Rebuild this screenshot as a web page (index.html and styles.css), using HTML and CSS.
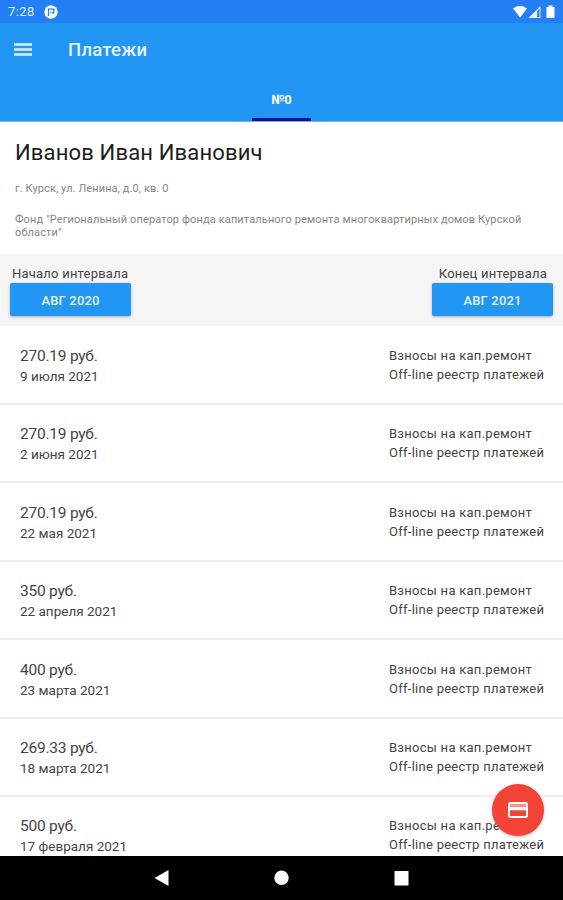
FILE: index.html
```
<!DOCTYPE html>
<html lang="ru">
<head>
  <meta charset="UTF-8">
  <meta name="viewport" content="width=device-width, initial-scale=1.0">
  <title>Платежи</title>
  <link rel="stylesheet" href="styles.css">
</head>
<body>
  <div class="screen">
    <div class="status-bar">
      <span class="clock">7:28</span>
      <svg class="app-icon" width="14" height="14" viewBox="0 0 14 14">
        <circle cx="7" cy="7" r="6.7" fill="#fff"/>
        <path d="M4.500 11V4.200h5.300v3.600H8" fill="none" stroke="#237ff3" stroke-width="1.300"/>
        <path d="M7 6.500v2" stroke="#237ff3" stroke-width="1"/>
      </svg>
      <svg class="signals" width="43" height="14" viewBox="0 0 43 14">
        <path d="M0 3.500Q7-2 14 3.500L7.100 12.500z" fill="#fff"/>
        <path d="M15.500 13L27.500 1v12z" fill="#e4f0ff"/>
        <path d="M24.200 6l2.300-2.300V12h-2.300z" fill="#237ff3"/>
        <path d="M33.500 2h2V.5h4V2h2v11h-8z" fill="#fff"/>
      </svg>
    </div>

    <header class="app-header">
      <div class="toolbar">
        <svg class="menu-icon" width="18" height="13" viewBox="0 0 18 13">
          <path d="M0 1.500h18M0 6.500h18M0 11.500h18" stroke="#dcefff" stroke-width="2.500"/>
        </svg>
        <h1>Платежи</h1>
      </div>
      <div class="tabs"><span class="tab">№0</span></div>
    </header>

    <section class="owner">
      <h2>Иванов Иван Иванович</h2>
      <p class="address">г. Курск, ул. Ленина, д.0, кв. 0</p>
      <p class="fund">Фонд "Региональный оператор фонда капитального ремонта многоквартирных домов Курской<br>области"</p>
    </section>

    <section class="interval">
      <div class="period">
        <label>Начало интервала</label>
        <button>АВГ 2020</button>
      </div>
      <div class="period">
        <label class="end">Конец интервала</label>
        <button>АВГ 2021</button>
      </div>
    </section>

    <main class="payments">
      <div class="payment">
        <div><div class="sum">270.19 руб.</div><div class="date">9 июля 2021</div></div>
        <div class="info">Взносы на кап.ремонт<br><span class="source">Off-line реестр платежей</span></div>
      </div>
      <div class="payment">
        <div><div class="sum">270.19 руб.</div><div class="date">2 июня 2021</div></div>
        <div class="info">Взносы на кап.ремонт<br><span class="source">Off-line реестр платежей</span></div>
      </div>
      <div class="payment">
        <div><div class="sum">270.19 руб.</div><div class="date">22 мая 2021</div></div>
        <div class="info">Взносы на кап.ремонт<br><span class="source">Off-line реестр платежей</span></div>
      </div>
      <div class="payment">
        <div><div class="sum">350 руб.</div><div class="date">22 апреля 2021</div></div>
        <div class="info">Взносы на кап.ремонт<br><span class="source">Off-line реестр платежей</span></div>
      </div>
      <div class="payment">
        <div><div class="sum">400 руб.</div><div class="date">23 марта 2021</div></div>
        <div class="info">Взносы на кап.ремонт<br><span class="source">Off-line реестр платежей</span></div>
      </div>
      <div class="payment">
        <div><div class="sum">269.33 руб.</div><div class="date">18 марта 2021</div></div>
        <div class="info">Взносы на кап.ремонт<br><span class="source">Off-line реестр платежей</span></div>
      </div>
      <div class="payment">
        <div><div class="sum">500 руб.</div><div class="date">17 февраля 2021</div></div>
        <div class="info">Взносы на кап.ремонт<br><span class="source">Off-line реестр платежей</span></div>
      </div>
    </main>

    <!-- кнопка оплаты -->
    <div class="fab">
      <svg width="20" height="16" viewBox="0 0 20 16">
        <rect x="1" y="1" width="18" height="14" rx="1.500" fill="none" stroke="#fff" stroke-width="2"/>
        <path d="M2 3.200h16" stroke="#ff9d95" stroke-width="2"/>
        <path d="M1 6.500h18" stroke="#fff" stroke-width="3.500"/>
      </svg>
    </div>

    <nav class="nav-bar">
      <svg width="16" height="18" viewBox="0 0 16 18"><path d="M.5 9L14.500 1v16z" fill="#fff"/></svg>
      <svg width="16" height="18" viewBox="0 0 16 18"><circle cx="7.500" cy="8.800" r="7.200" fill="#fff"/></svg>
      <svg width="16" height="18" viewBox="0 0 16 18"><rect x=".5" y="2" width="14" height="14.500" rx=".5" fill="#fff"/></svg>
    </nav>
  </div>
</body>
</html>
```
FILE: styles.css
```
* { box-sizing:border-box; margin:0; padding:0; }
body { font-family:Roboto,"Noto Sans",sans-serif; background:#fff; color:#444; }
.screen { position:relative; width:563px; height:900px; display:flex; flex-direction:column; overflow:hidden; }

.status-bar { height:23px; flex:none; display:flex; align-items:center; padding:0 7px 0 8px; background:#237ff3; }
.clock { color:#e4f0ff; font-size:13px; letter-spacing:.4px; }
.app-icon { margin-left:9px; }
.signals { margin-left:auto; }

.app-header { height:99px; flex:none; background:#2196f3; border-bottom:1px solid #69b6f2; }
.toolbar { height:53px; display:flex; align-items:center; padding-left:14px; }
.toolbar h1 { margin-left:36px; font-size:18.5px; font-weight:500; letter-spacing:.25px; color:#e4f3ff; }
.tabs { height:45px; display:flex; justify-content:center; }
.tab { width:59px; height:45px; border-bottom:3px solid #10108c; color:#fff; font-size:13px; font-weight:700; line-height:47px; text-align:center; }

.owner { height:132px; flex:none; padding:17px 15px 0; }
.owner h2 { font-size:22px; font-weight:400; line-height:28px; letter-spacing:.15px; color:#1c1c1c; }
.address { margin-top:15px; font-size:11px; line-height:13px; letter-spacing:.1px; color:#858585; }
.fund { margin-top:18px; font-size:11px; line-height:13px; letter-spacing:.13px; color:#858585; white-space:nowrap; }

.interval { height:72px; flex:none; display:flex; justify-content:space-between; padding:11px 10px 0; background:#f5f5f5; }
.period { width:121px; display:flex; flex-direction:column; }
.period label { margin-bottom:1px; padding-left:2px; font-size:13px; line-height:17px; letter-spacing:.22px; white-space:nowrap; }
.period .end { padding:0 6px 0 0; text-align:right; }
.period button { height:33px; border:none; border-radius:2px; background:#2196f3; color:#e4f3ff; font-family:inherit; font-size:13px; font-weight:500; line-height:35px; letter-spacing:.15px; box-shadow:0 1px 3px rgba(0,0,0,.3); }

.payments { flex:1; min-height:0; padding-top:.6px; overflow:hidden; }
.payment { height:78.4px; display:flex; justify-content:space-between; padding:19.5px 19px 0 20px; border-bottom:2px solid #eee; }
.sum { font-size:15.5px; line-height:21px; letter-spacing:-.23px; }
.date { font-size:13.5px; line-height:19px; }
.info { width:155px; font-size:13px; line-height:19px; letter-spacing:.27px; white-space:nowrap; }

.fab { position:absolute; left:492px; top:784px; width:52px; height:52px; border-radius:50%; display:flex; align-items:center; justify-content:center; background:#f44336; box-shadow:0 1px 3px rgba(0,0,0,.3); }

.nav-bar { height:44px; flex:none; display:flex; align-items:center; justify-content:center; gap:104px; background:#000; }
```
